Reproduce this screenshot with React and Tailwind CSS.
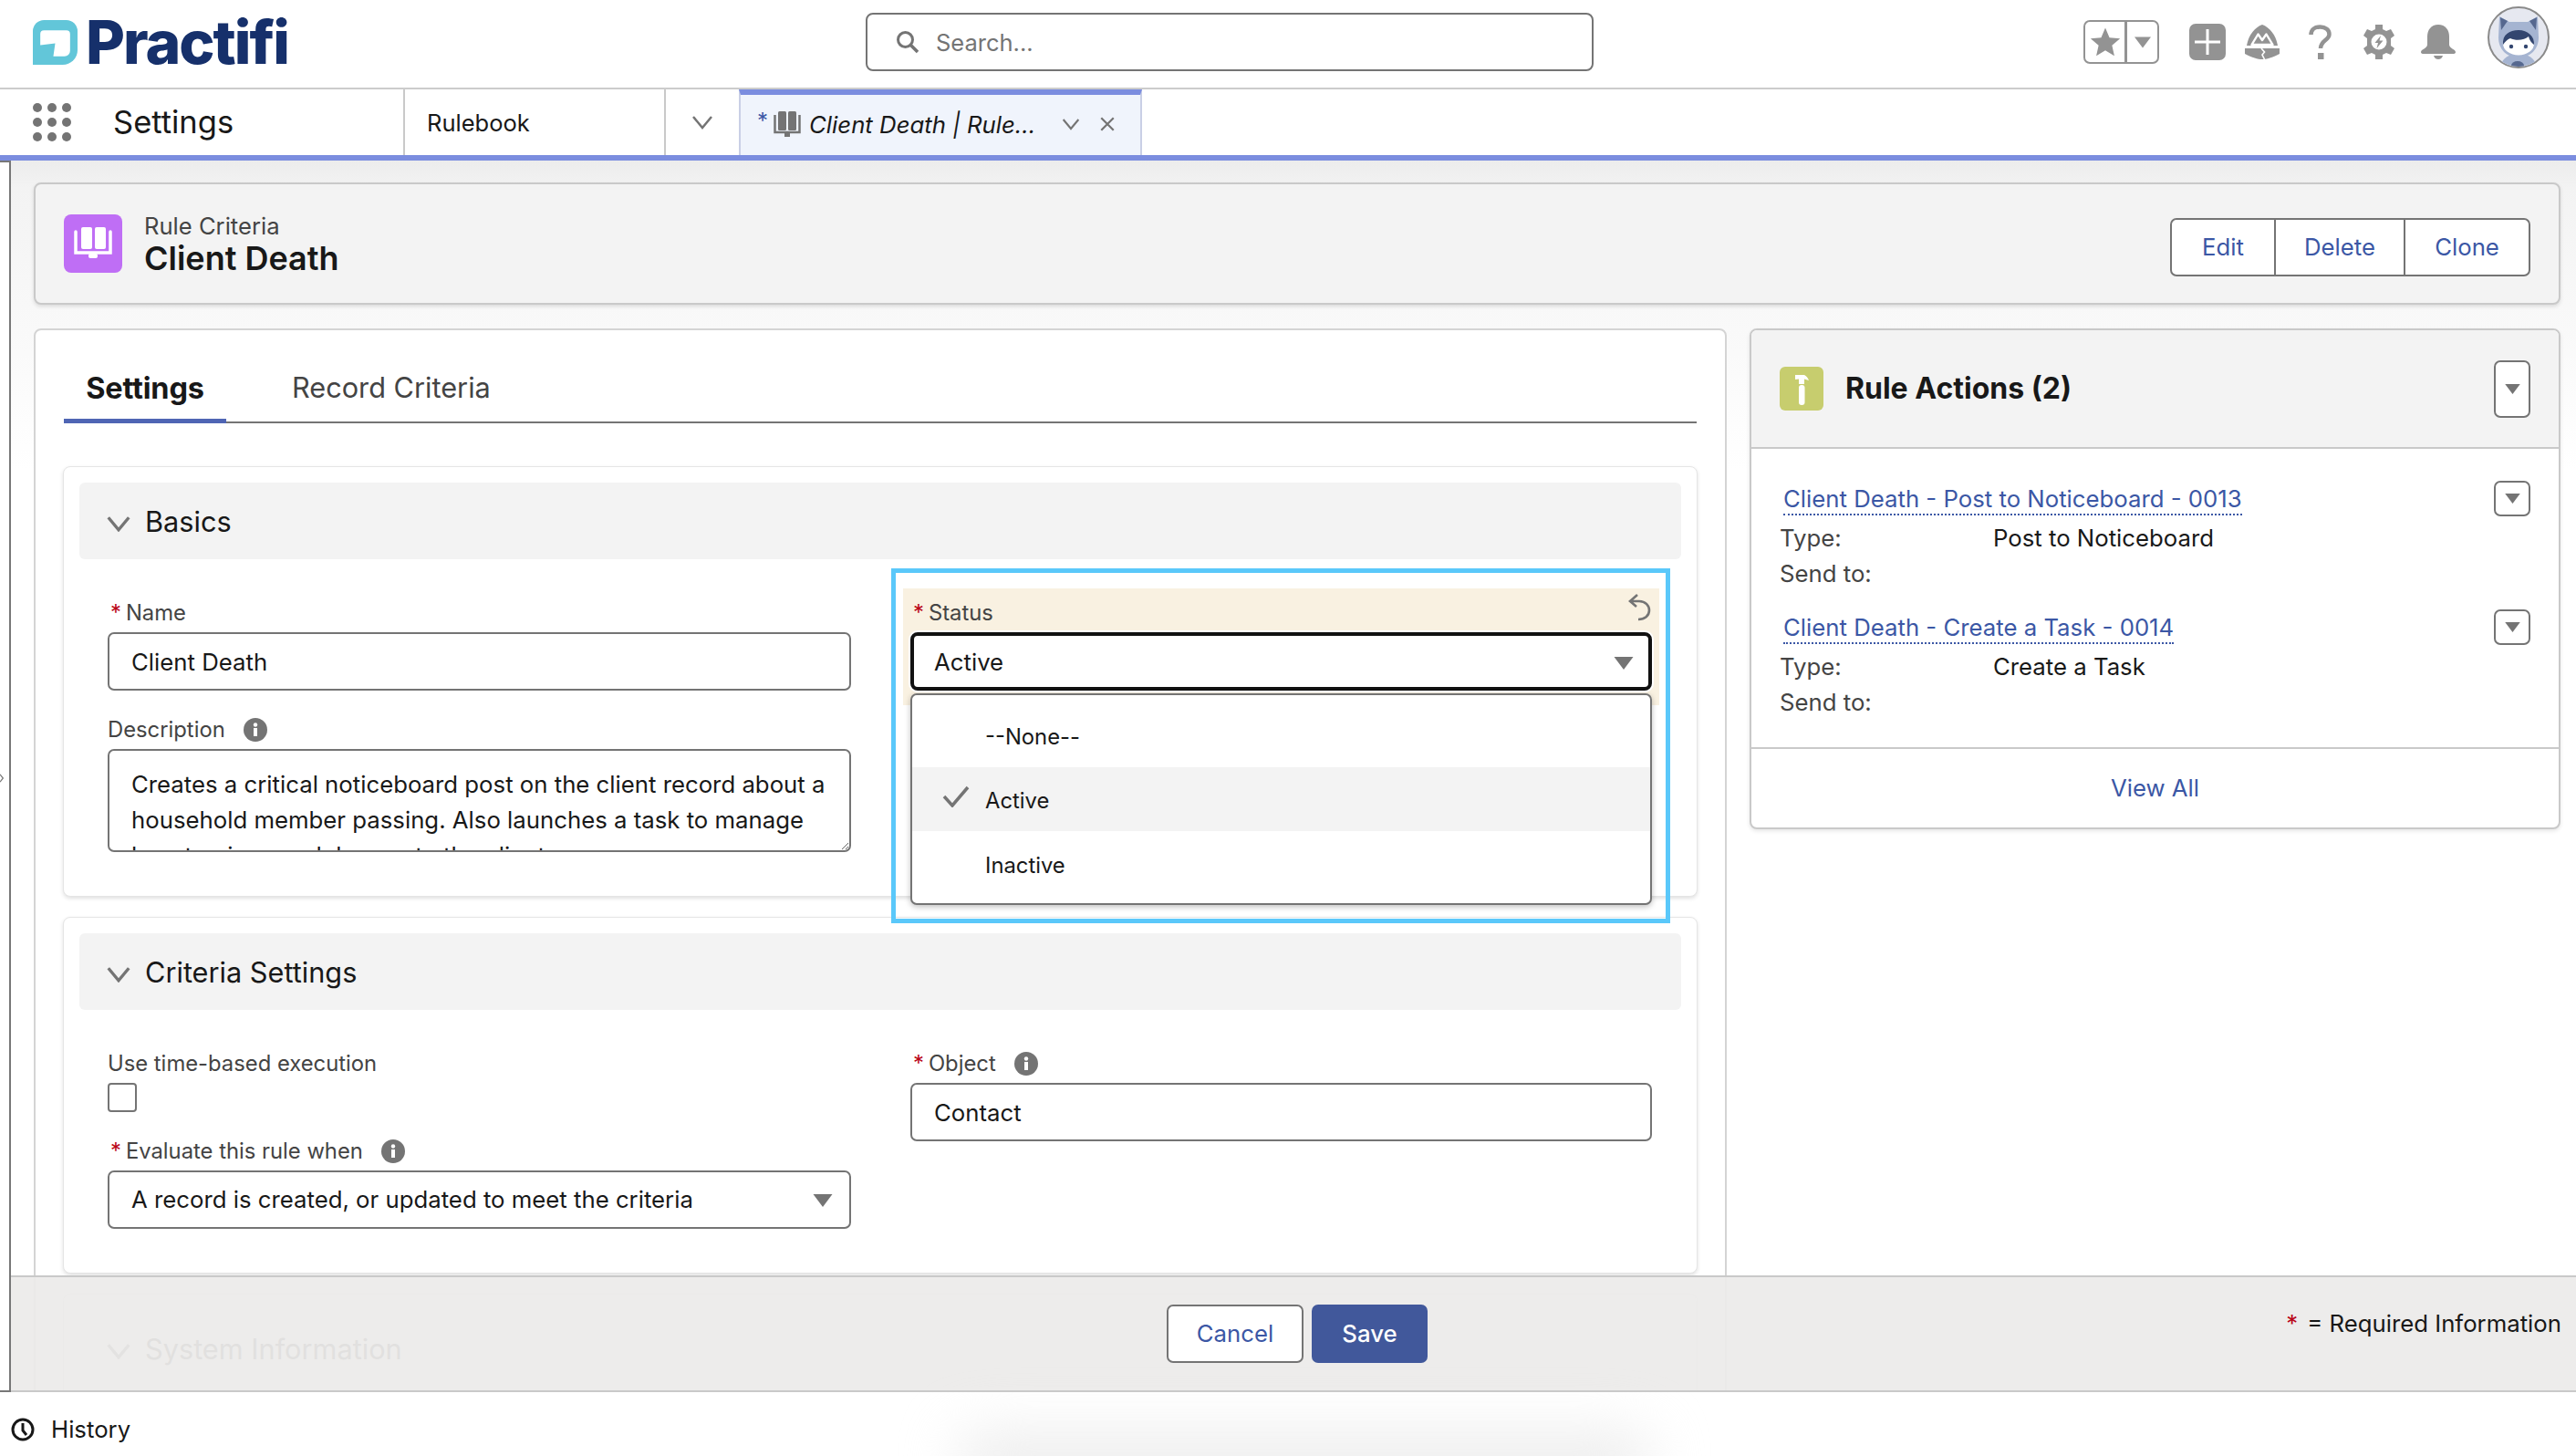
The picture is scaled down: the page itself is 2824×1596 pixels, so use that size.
import React from "react";

const Caret = ({ className = "w-[18px] h-[12px]" }) => (
  <svg viewBox="0 0 18 12" className={className}><path d="M0 0H18L9 12Z" fill="#747474" /></svg>
);
const Chevron = ({ className, color = "#747474", w = 3 }) => (
  <svg viewBox="0 0 24 16" className={className} fill="none"><path d="M2 2L12 14L22 2" stroke={color} strokeWidth={w} /></svg>
);
const Info = () => (
  <svg viewBox="0 0 26 26" className="w-[26px] h-[26px]"><circle cx="13" cy="13" r="13" fill="#747474" /><rect x="11" y="11" width="4" height="9" fill="#fff" /><circle cx="13" cy="7.5" r="2.2" fill="#fff" /></svg>
);
const Req = () => <span className="text-[#ba0517] ml-[3px] mr-[5px]">*</span>;

function MenuBtn({ tall }) {
  return (
    <div className={`w-[40px] ${tall ? "h-[63px]" : "h-[39px]"} bg-white border-2 border-[#747474] rounded-[7px] flex items-center justify-center`}>
      <Caret className="w-[17px] h-[11px]" />
    </div>
  );
}

function Header() {
  return (
    <div className="h-[98px] shrink-0 bg-white border-b-2 border-[#cccccc] flex items-start">
      <div className="w-[949px] pl-[36px] pt-[22px] flex items-center">
        <svg viewBox="0 0 48 48" className="w-[49px] h-[49px] shrink-0">
          <path d="M12 0H36a12 12 0 0 1 12 12V32a16 16 0 0 1-16 16H0V12A12 12 0 0 1 12 0Z" fill="#62c6d9" />
          <path d="M12 11H36a4 4 0 0 1 4 4V33a6 6 0 0 1-6 6H22L24 25L8 27V15a4 4 0 0 1 4-4Z" fill="#fff" />
        </svg>
        <span className="ml-[9px] text-[66px] leading-[49px] font-extrabold tracking-[-2px] text-[#16306b]">Practifi</span>
      </div>
      <div className="mt-[14px] w-[798px] h-[64px] border-2 border-[#747474] rounded-[8px] flex items-center pl-[30px]">
        <svg viewBox="0 0 28 28" className="w-[28px] h-[28px]" fill="none"><circle cx="11.5" cy="11.5" r="8" stroke="#747474" strokeWidth="3" /><path d="M17.5 17.5L25 25" stroke="#747474" strokeWidth="3.5" /></svg>
        <span className="ml-[17px] pt-[3px] text-[25.5px] text-[#747474]">Search...</span>
      </div>
      <div className="ml-[537px] mt-[22px] w-[83px] h-[48px] border-2 border-[#939393] rounded-[7px] flex">
        <div className="w-[46px] border-r-[3px] border-[#939393] flex items-center justify-center">
          <svg viewBox="0 0 24 24" className="w-[34px] h-[34px]"><path d="M12 1L15.2 8.6L23.4 9.3L17.2 14.7L19 22.8L12 18.5L5 22.8L6.8 14.7L0.6 9.3L8.8 8.6Z" fill="#939393" /></svg>
        </div>
        <div className="flex-1 flex items-center justify-center"><svg viewBox="0 0 18 12" className="w-[18px] h-[13px]"><path d="M0 0H18L9 12Z" fill="#939393" /></svg></div>
      </div>
      <div className="ml-[33px] mt-[26px] w-[40px] h-[40px] rounded-[7px] bg-[#939393] flex items-center justify-center">
        <svg viewBox="0 0 28 28" className="w-[28px] h-[28px]"><path d="M12.5 0H15.5V12.5H28V15.5H15.5V28H12.5V15.5H0V12.5H12.5Z" fill="#fff" /></svg>
      </div>
      <svg viewBox="0 0 38 38" className="ml-[21px] mt-[27px] w-[38px] h-[38px]">
        <path d="M19 0C27 3 34 11 36 23H2C4 11 11 3 19 0Z" fill="#939393" />
        <path d="M0 26H38V32C30 36 24 38 19 38C14 38 8 36 0 32Z" fill="#939393" />
        <path d="M7.500 22L14.500 10.500L19 17L23.500 10.500L30.500 22Z" fill="#939393" stroke="#fff" strokeWidth="2.4" strokeLinejoin="round" />
        <path d="M18 26L21.500 30L19 33L21.500 38" stroke="#fff" strokeWidth="1.6" fill="none" />
      </svg>
      <svg viewBox="0 0 25 38" className="ml-[32px] mt-[27px] w-[25px] h-[38px]" fill="none">
        <path d="M2.500 11C2.500 5.500 6.500 2.500 12.500 2.500C18.500 2.500 22.500 6 22.500 10.500C22.500 17 13 17.500 13 26" stroke="#939393" strokeWidth="4.5" />
        <rect x="10" y="31" width="6.5" height="7" fill="#939393" />
      </svg>
      <svg viewBox="0 0 36 38" className="ml-[34px] mt-[27px] w-[36px] h-[38px]">
        <path fillRule="evenodd" d="M14 0H22V5L26 7L31 5L35 12L31 15V23L35 26L31 33L26 31L22 33V38H14V33L10 31L5 33L1 26L5 23V15L1 12L5 5L10 7L14 5ZM18 10.500A8.500 8.500 0 1 0 18 27.500A8.500 8.500 0 1 0 18 10.500Z" fill="#939393" />
        <path d="M20 12L13.500 20H17L15.500 26L22.500 17.500H18.500Z" fill="#939393" />
      </svg>
      <svg viewBox="0 0 38 38" className="ml-[28px] mt-[27px] w-[38px] h-[38px]">
        <path d="M19 0C27 0 31 6 31 13V22C31 26 38 27 38 30C38 31.500 37 32 35 32H3C1 32 0 31.500 0 30C0 27 7 26 7 22V13C7 6 11 0 19 0Z" fill="#939393" />
        <path d="M14 34H24C23 37 21 38 19 38C17 38 15 37 14 34Z" fill="#939393" />
      </svg>
      <svg viewBox="0 0 68 68" className="ml-[35px] mt-[7px] w-[68px] h-[68px]">
        <circle cx="34" cy="34" r="33" fill="#e6e8f0" stroke="#8a8a8a" strokeWidth="2" />
        <clipPath id="av"><circle cx="34" cy="34" r="32" /></clipPath>
        <g clipPath="url(#av)">
          <path d="M13 11L24 17H44L55 11L56 34C56 47 47 56 34 56C21 56 12 47 12 34Z" fill="#a5b4d1" />
          <path d="M14 12L22 16L15 26Z M54 12L46 16L53 26Z" fill="#56688f" />
          <path d="M14 70C14 58 22 52 34 52C46 52 54 58 54 70Z" fill="#a5b4d1" />
          <ellipse cx="34" cy="41" rx="17" ry="12.5" fill="#fff" />
          <path d="M17 42C16 31 24 26 34 26C44 26 52 33 51 42C48 40 46 37 45 33C41 37 31 38 25 35C22 36 19 39 17 42Z" fill="#33466f" />
          <circle cx="26" cy="44" r="2.2" fill="#33466f" /><circle cx="42" cy="44" r="2.2" fill="#33466f" />
          <ellipse cx="33" cy="65" rx="7" ry="5" fill="#56688f" />
        </g>
      </svg>
    </div>
  );
}

function Nav() {
  return (
    <div className="h-[78px] shrink-0 bg-white border-b-[6px] border-[#7b8ddf] flex">
      <div className="w-[442px] flex items-center pl-[36px]">
        <div className="grid grid-cols-3 gap-x-[6px] gap-y-[6px]">
          {[0,1,2,3,4,5,6,7,8].map((i) => <span key={i} className="w-[10px] h-[10px] rounded-full bg-[#747474]" />)}
        </div>
        <span className="ml-[46px] text-[34.5px] text-[#181818]">Settings</span>
      </div>
      <div className="w-[286px] border-l-2 border-[#c9c9c9] flex items-center pl-[24px] pt-[2px] text-[25.5px] text-[#181818]">Rulebook</div>
      <div className="w-[82px] border-l-2 border-[#c9c9c9] flex items-center justify-center">
        <Chevron className="w-[24px] h-[16px]" w={2.5} />
      </div>
      <div className="w-[442px] bg-[#f0f4fc] border-x-2 border-[#c9cfe6] border-t-[6px] border-t-[#7b8ddf] flex items-center pl-[18px] relative">
        <span className="text-[#3b57a5] text-[24px] mr-[6px] -mt-[8px]">*</span>
        <svg viewBox="0 0 30 30" className="w-[30px] h-[30px] shrink-0">
          <rect x="5" y="0" width="9" height="21" rx="1.5" fill="#747474" /><rect x="16" y="0" width="9" height="21" rx="1.5" fill="#747474" />
          <path d="M1.500 4V23H28.500V4" fill="none" stroke="#747474" strokeWidth="2.5" /><rect x="12" y="24" width="6" height="4" fill="#747474" />
        </svg>
        <span className="ml-[9px] text-[25.75px] italic text-[#181818] whitespace-nowrap">Client Death | Rule...</span>
        <Chevron className="absolute left-[352px] top-[25px] w-[20px] h-[14px]" w={2.5} />
        <svg viewBox="0 0 16 16" className="absolute left-[393px] top-[23px] w-[18px] h-[18px]" fill="none"><path d="M2 2L14 14M14 2L2 14" stroke="#747474" strokeWidth="2" /></svg>
      </div>
    </div>
  );
}

function Field({ label, required, info, children, className = "" }) {
  return (
    <div className={className}>
      <div className="h-[36px] flex items-center text-[23.8px] text-[#444444]">
        {required && <Req />}<span>{label}</span>
        {info && <span className="ml-[20px] flex"><Info /></span>}
      </div>
      <div className="mt-[3px]">{children}</div>
    </div>
  );
}
const Input = ({ children }) => (
  <div className="h-[64px] bg-white border-2 border-[#747474] rounded-[7px] flex items-center pl-[24px] pt-[2px] text-[25.75px] text-[#181818]">{children}</div>
);

function Section({ title, children, faint }) {
  return (
    <section className="bg-white rounded-[8px] border border-[#e5e5e5] shadow-[0_2px_4px_rgba(0,0,0,0.12)] px-[17px] py-[17px]">
      <div className={`h-[84px] bg-[#f3f3f3] rounded-[6px] flex items-center pl-[29px] text-[30.7px] ${faint ? "text-[#555]" : "text-[#181818]"}`}>
        <Chevron className="w-[28px] h-[18px] mt-[6px]" />
        <span className="ml-[15px] pt-[2px]">{title}</span>
      </div>
      {children}
    </section>
  );
}

function MainCard() {
  return (
    <div className="w-[1856px] h-[1400px] bg-white border-2 border-[#d4d4d4] rounded-t-[8px] shrink-0">
      <div className="mx-[31px] h-[102px] border-b-2 border-[#747474] flex items-end">
        <div className="w-[178px] h-[60px] -mb-[2px] border-b-[5px] border-[#4f65b4] text-center text-[32.5px] font-bold text-[#181818] leading-[44px] tracking-[-0.2px]">Settings</div>
        <div className="ml-[72px] h-[60px] text-[30.7px] text-[#444444] leading-[46px]">Record Criteria</div>
      </div>
      <div className="mx-[30px] mt-[47px] flex flex-col gap-[22px]">
        <Section title="Basics">
          <div className="grid grid-cols-[815px_813px] gap-x-[65px] pl-[31px] pt-[41px] pb-[31px]">
            <div>
              <Field label="Name" required><Input>Client Death</Input></Field>
              <Field label="Description" info className="mt-[25px]">
                <textarea readOnly rows={3} className="block w-full h-[113px] bg-white border-2 border-[#747474] rounded-[7px] px-[24px] pt-[17px] text-[25.75px] leading-[39px] text-[#181818] overflow-hidden resize-y outline-none" value="Creates a critical noticeboard post on the client record about a household member passing. Also launches a task to manage how to give condolences to the client." />
              </Field>
            </div>
            <div className="relative">
              <div className="-mx-[8px] -mt-[9px] px-[8px] pt-[9px] pb-[16px] bg-[#f9f1e1]">
                <div className="h-[36px] flex items-center text-[23.8px] text-[#444444] relative">
                  <Req /><span>Status</span>
                  <svg viewBox="0 0 26 30" className="absolute right-[1px] -top-[3px] w-[26px] h-[30px]" fill="none"><path d="M11 1L3 8L10 14M3 8H13C20 8 24 13 24 18C24 24 19 28 12 28" stroke="#747474" strokeWidth="2.6" /></svg>
                </div>
                <div className="mt-[3px] h-[64px] bg-white border-[4px] border-[#111111] rounded-[8px] shadow-[0_0_0_2px_#ffffff] flex items-center justify-between pl-[22px] pr-[16px] pt-[3px] text-[25.75px] text-[#181818]">
                  Active<Caret className="w-[22px] h-[14px]" />
                </div>
              </div>
              <div className="absolute left-0 right-0 top-[106px] h-[232px] bg-white border-2 border-[#747474] rounded-[7px] shadow-[0_2px_6px_rgba(0,0,0,0.25)] pt-[8px] text-[23.8px] text-[#181818] z-10">
                <div className="h-[71px] flex items-center pl-[80px] pt-[5px]">--None--</div>
                <div className="h-[70px] bg-[#f3f3f3] flex items-center relative pl-[80px] pt-[4px]">
                  <svg viewBox="0 0 30 24" className="absolute left-[33px] top-[20px] w-[30px] h-[24px]" fill="none"><path d="M2 12L11 22L28 2" stroke="#747474" strokeWidth="3.5" /></svg>
                  Active
                </div>
                <div className="h-[75px] flex items-center pl-[80px]">Inactive</div>
              </div>
            </div>
          </div>
        </Section>
        <Section title="Criteria Settings">
          <div className="grid grid-cols-[815px_813px] gap-x-[65px] pl-[31px] pt-[41px] pb-[31px]">
            <div>
              <Field label="Use time-based execution">
                <div className="w-[32px] h-[32px] bg-white border-2 border-[#747474] rounded-[4px] mt-[1px]" />
              </Field>
              <Field label="Evaluate this rule when" required info className="mt-[25px]">
                <div className="h-[64px] bg-white border-2 border-[#747474] rounded-[7px] flex items-center justify-between pl-[24px] pr-[18px] pt-[1px] text-[25.75px] text-[#181818]">
                  A record is created, or updated to meet the criteria<Caret className="w-[22px] h-[14px]" />
                </div>
              </Field>
            </div>
            <div>
              <Field label="Object" required info><Input>Contact</Input></Field>
            </div>
          </div>
        </Section>
        <Section title="System Information" faint />
      </div>
    </div>
  );
}

function ActionItem({ link, type, mb }) {
  return (
    <div className={`relative pl-[31px] ${mb}`}>
      <div className="h-[39px] flex items-start justify-between pr-[31px]">
        <a className="ml-[4px] text-[25.75px] leading-[36px] pt-[2px] text-[#3b57a5] border-b-2 border-dotted border-[#3b57a5] h-[38px]">{link}</a>
        <MenuBtn />
      </div>
      <div className="flex text-[25.75px] leading-[39px] mt-[4px]">
        <span className="w-[234px] text-[#444444]">Type:</span><span className="text-[#181818]">{type}</span>
      </div>
      <div className="text-[25.75px] leading-[39px] text-[#444444]">Send to:</div>
    </div>
  );
}

function Aside() {
  return (
    <div className="w-[889px] self-start bg-white border-2 border-[#c9c9c9] rounded-[8px] shadow-[0_2px_4px_rgba(0,0,0,0.1)] overflow-hidden">
      <div className="h-[130px] bg-[#f3f3f3] border-b-2 border-[#c9c9c9] flex items-center pl-[31px] pr-[31px]">
        <div className="w-[48px] h-[48px] rounded-[6px] bg-[#c7cd6e] flex items-center justify-center">
          <svg viewBox="0 0 20 36" className="w-[20px] h-[36px]"><path d="M3 3H13C15 4 17 6 18 9L13 7.5V13H7V7.5L3 8Z" fill="#fff" /><rect x="7" y="14" width="6.5" height="22" rx="3" fill="#fff" /></svg>
        </div>
        <span className="ml-[24px] text-[32px] font-bold text-[#181818]">Rule Actions (2)</span>
        <span className="ml-auto flex"><MenuBtn tall /></span>
      </div>
      <div className="pt-[35px] pb-[30px]">
        <ActionItem link="Client Death - Post to Noticeboard - 0013" type="Post to Noticeboard" mb="mb-[20px]" />
        <ActionItem link="Client Death - Create a Task - 0014" type="Create a Task" />
      </div>
      <div className="h-[88px] border-t-2 border-[#c9c9c9] flex items-center justify-center text-[25.75px] text-[#3b57a5]">View All</div>
    </div>
  );
}

function Footer() {
  return (
    <div className="absolute left-0 right-0 bottom-0 h-[128px] bg-[rgba(236,235,233,0.93)] border-t-2 border-[#c9c9c9] border-b-2 border-b-[#c9c9c9] flex justify-center pl-[8px] pt-[30px] z-20">
      <div className="w-[150px] h-[64px] bg-white border-2 border-[#747474] rounded-[7px] flex items-center justify-center text-[25.75px] text-[#3b57a5]">Cancel</div>
      <div className="ml-[9px] w-[127px] h-[64px] bg-[#41589b] rounded-[7px] flex items-center justify-center text-[25.75px] font-medium text-white">Save</div>
      <div className="absolute right-[16px] top-[32px] text-[25.75px] text-[#181818]"><span className="text-[#ba0517] mr-[10px]">*</span>= Required Information</div>
    </div>
  );
}

export default function App() {
  return (
    <div className="relative w-[2824px] h-[1596px] overflow-hidden bg-white flex flex-col font-['Inter','Liberation_Sans',sans-serif]">
      <Header />
      <Nav />
      <div className="h-[1350px] shrink-0 flex relative">
        <div className="w-[10px] border-t-2 border-b-2 border-[#777777] relative shrink-0">
          <svg viewBox="0 0 6 12" className="absolute left-0 top-[670px] w-[5px] h-[10px]" fill="none"><path d="M0 1L4 6L0 11" stroke="#777" strokeWidth="1.5" /></svg>
        </div>
        <div className="flex-1 relative overflow-hidden border-l-2 border-[#777777] bg-[linear-gradient(180deg,#ececec_0px,#f3f3f3_30px,#ffffff_340px)] pl-[25px] pt-[24px]">
          <div className="w-[2770px] h-[134px] bg-[#f3f3f3] border-2 border-[#c9c9c9] rounded-[8px] shadow-[0_2px_4px_rgba(0,0,0,0.12)] flex items-center pl-[31px] pr-[31px]">
            <div className="w-[64px] h-[64px] rounded-[8px] bg-[#bf6ef5] flex items-center justify-center">
              <svg viewBox="0 0 42 36" className="w-[42px] h-[36px]">
                <rect x="8" y="0" width="12" height="24" rx="2" fill="#fff" /><rect x="23" y="0" width="12" height="24" rx="2" fill="#fff" />
                <path d="M2 5V28H40V5" fill="none" stroke="#fff" strokeWidth="3.5" strokeLinecap="round" /><rect x="16" y="29" width="10" height="5" rx="2" fill="#fff" />
              </svg>
            </div>
            <div className="ml-[24px] flex flex-col pt-[1px]">
              <span className="text-[25.6px] leading-[30px] text-[#444444]">Rule Criteria</span>
              <span className="text-[36px] leading-[40px] font-semibold text-[#181818]">Client Death</span>
            </div>
            <div className="ml-auto mt-[8px] flex h-[64px] bg-white border-2 border-[#747474] rounded-[7px] text-[25.75px] text-[#3b57a5]">
              <div className="w-[112px] flex items-center justify-center">Edit</div>
              <div className="w-[144px] border-x-2 border-[#747474] flex items-center justify-center">Delete</div>
              <div className="w-[135px] flex items-center justify-center">Clone</div>
            </div>
          </div>
          <div className="mt-[26px] flex gap-[25px] items-start">
            <MainCard />
            <Aside />
          </div>
          <Footer />
        </div>
      </div>
      <div className="flex-1 bg-white relative flex items-center pl-[12px] pt-[12px] text-[25.75px] text-[#181818]">
        <div className="absolute left-[1050px] top-[45px] w-[760px] h-[60px] rounded-full bg-[#ececec] blur-[30px]" />
        <svg viewBox="0 0 26 26" className="w-[26px] h-[26px] relative" fill="none"><circle cx="13" cy="13" r="11" stroke="#181818" strokeWidth="3" /><path d="M13 6V14L17 19" stroke="#181818" strokeWidth="3" /></svg>
        <span className="ml-[18px] relative">History</span>
      </div>
      <div className="absolute left-[977px] top-[623px] w-[854px] h-[389px] border-[5px] border-[#5ac8fa] z-30 pointer-events-none" />
    </div>
  );
}
